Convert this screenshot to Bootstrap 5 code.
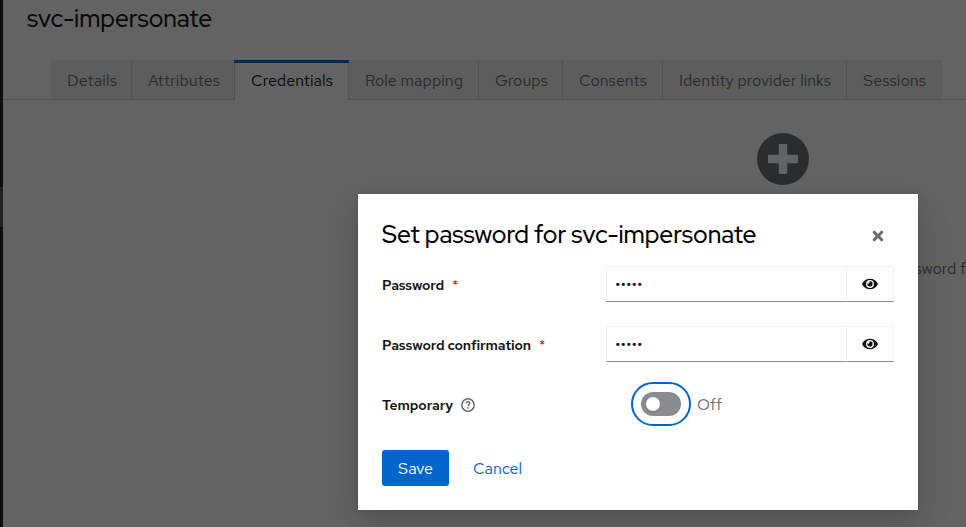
<!DOCTYPE html>
<html lang="en">
<head>
<meta charset="utf-8">
<meta name="viewport" content="width=device-width, initial-scale=1">
<title>svc-impersonate</title>
<link href="https://cdn.jsdelivr.net/npm/bootstrap@5.3.0/dist/css/bootstrap.min.css" rel="stylesheet">
<style>
body{font-family:"Red Hat Text",Inter,"Liberation Sans",sans-serif;font-size:16px;line-height:24px;color:#151515;height:527px;overflow:hidden;background:#fff}
.shell{height:527px}
.side-nav{width:3px;background:#212427;padding-top:187px;flex:none}
.side-current{height:40px;background:#4f5255}
.page-title{font-family:"Red Hat Display",Inter,sans-serif;font-size:24.5px;line-height:31px;font-weight:500;margin:0;padding:3px 0 0 24px;height:60px}
.user-tabs{padding-left:48px;height:40px;border-bottom:1px solid #d2d2d2}
.user-tabs .nav-link{height:39px;padding:9px 0 0 16px;background:#f0f0f0;color:#6a6e73;border-radius:0;border-right:1px solid #d2d2d2;font-weight:400;white-space:nowrap}
.user-tabs .nav-link.active{height:40px;margin-left:-1px;padding-left:17px;border:0;color:#151515;background:linear-gradient(#06c,#06c) 0 0/100% 3px no-repeat,linear-gradient(#d2d2d2,#d2d2d2) 0 0/1px 100% no-repeat,linear-gradient(#d2d2d2,#d2d2d2) 100% 0/1px 100% no-repeat,#fff}
.user-tabs li:last-child .nav-link{border-right:0}
.empty-icon{width:52px;height:52px;margin:33px 0 0 754px;display:block}
.empty-copy{margin-top:72px;color:#6a6e73;white-space:nowrap}
.shade{position:absolute;inset:0;background:rgba(3,3,3,.62)}
.dialog-box{position:absolute;left:358px;top:194px;width:560px;height:316px;background:#fff;padding:24px;box-shadow:0 16px 32px rgba(3,3,3,.16),0 0 8px rgba(3,3,3,.1)}
.dialog-title{font-family:"Red Hat Display",Inter,sans-serif;font-size:24.5px;line-height:31px;font-weight:500;margin:1px 0 0;color:#000}
.dialog-head{height:48px}
.close-btn{width:32px;height:32px;margin-top:2px}
.field{height:36px;margin-bottom:24px}
.field-name{width:224px;font-size:14px;line-height:21px;font-weight:600;padding-top:9px}
.req{color:#c9190b;font-weight:400;font-size:14px;margin-left:8px}
.pass-group{width:288px;height:36px}
.pass-group .form-control{height:36px;border:1px solid #f0f0f0;border-bottom-color:#8a8d90;border-radius:0;padding:0 8px;color:#151515;font-size:16px}
.pass-group .btn{width:48px;flex:none;height:36px;padding:0;border:1px solid #f0f0f0;border-bottom-color:#8a8d90;border-radius:0}
.toggle-ring{width:60px;height:44px;border:2px solid #06c;border-radius:22px;margin-left:25px;margin-top:-4px}
.toggle-track{width:40px;height:24px;border-radius:12px;background:#8a8d90;padding-left:5px}
.toggle-knob{width:14px;height:14px;border-radius:50%;background:#fff;box-shadow:0 1px 2px rgba(3,3,3,.15)}
.off-label{color:#6a6e73;margin:7px 0 0 6px}
.help-icon{margin-top:3px}
.save-btn{width:67px;height:36px;padding:1px 0 0;background:#06c;color:#fff;border:0;border-radius:3px}
.cancel-btn{width:97px;height:36px;padding:1px 0 0;color:#06c;border:0}
.actions{padding-top:4px}
.fit{display:inline-block;white-space:nowrap}
</style>
<script src="https://cdn.jsdelivr.net/npm/bootstrap@5.3.0/dist/js/bootstrap.bundle.min.js"></script>
</head>
<body>
<div class="shell d-flex">
  <div class="side-nav"><div class="side-current"></div></div>
  <main class="flex-grow-1 overflow-hidden">
    <h1 class="page-title"><span class="fit" data-w="185">svc-impersonate</span></h1>
    <ul class="nav user-tabs flex-nowrap">
      <li class="nav-item"><a class="nav-link" data-tab="81"><span class="fit" data-w="50">Details</span></a></li>
      <li class="nav-item"><a class="nav-link" data-tab="103"><span class="fit" data-w="72">Attributes</span></a></li>
      <li class="nav-item"><a class="nav-link active" data-tab="115"><span class="fit" data-w="82">Credentials</span></a></li>
      <li class="nav-item"><a class="nav-link" data-tab="130"><span class="fit" data-w="98">Role mapping</span></a></li>
      <li class="nav-item"><a class="nav-link" data-tab="84"><span class="fit" data-w="53">Groups</span></a></li>
      <li class="nav-item"><a class="nav-link" data-tab="100"><span class="fit" data-w="68">Consents</span></a></li>
      <li class="nav-item"><a class="nav-link" data-tab="184"><span class="fit" data-w="152">Identity provider links</span></a></li>
      <li class="nav-item"><a class="nav-link" data-tab="95"><span class="fit" data-w="63">Sessions</span></a></li>
    </ul>
    <svg class="empty-icon" viewBox="0 0 52 52"><circle cx="26" cy="26" r="26" fill="#6a6e73"/><path d="M22.8 11h6.4q1 0 1 1v9.800h9.800q1 0 1 1v6.400q0 1-1 1h-9.800V40q0 1-1 1h-6.400q-1 0-1-1v-9.800H12q-1 0-1-1v-6.400q0-1 1-1h9.800V12q0-1 1-1z" fill="#fff"/></svg>
    <div class="empty-copy text-end"><span class="fit" data-w="77">password f</span></div>
  </main>
</div>
<div class="shade"></div>
<section class="dialog-box" role="dialog" aria-label="Set password">
  <div class="dialog-head d-flex justify-content-between">
    <h2 class="dialog-title"><span class="fit" data-w="374.500">Set password for svc-impersonate</span></h2>
    <button class="btn border-0 p-0 close-btn d-flex align-items-center justify-content-center" aria-label="Close"><svg width="12" height="12" viewBox="0 0 12 12"><path d="M2.200 2.200l7.600 7.600M9.800 2.200L2.200 9.800" stroke="#6a6e73" stroke-width="3" stroke-linecap="round"/></svg></button>
  </div>
  <div class="field d-flex">
    <label class="field-name"><span class="fit" data-w="62">Password</span><span class="req">*</span></label>
    <div class="input-group pass-group flex-nowrap"><input class="form-control" type="password" value="12345" aria-label="Password"><button class="btn d-flex align-items-center justify-content-center" aria-label="Show password"><svg width="16" height="14" viewBox="0 0 576 512"><path fill="#151515" d="M572.520 241.400C518.290 135.590 410.930 64 288 64S57.680 135.640 3.480 241.410a32.350 32.350 0 0 0 0 29.190C57.710 376.410 165.070 448 288 448s230.320-71.640 284.520-177.410a32.350 32.350 0 0 0 0-29.190zM288 400a144 144 0 1 1 144-144 143.930 143.930 0 0 1-144 144zm0-240a95.310 95.310 0 0 0-25.310 3.790 47.850 47.850 0 0 1-66.900 66.900A95.780 95.780 0 1 0 288 160z"/></svg></button></div>
  </div>
  <div class="field d-flex">
    <label class="field-name"><span class="fit" data-w="149">Password confirmation</span><span class="req">*</span></label>
    <div class="input-group pass-group flex-nowrap"><input class="form-control" type="password" value="12345" aria-label="Password confirmation"><button class="btn d-flex align-items-center justify-content-center" aria-label="Show password"><svg width="16" height="14" viewBox="0 0 576 512"><path fill="#151515" d="M572.520 241.400C518.290 135.590 410.930 64 288 64S57.680 135.640 3.480 241.410a32.350 32.350 0 0 0 0 29.190C57.710 376.410 165.070 448 288 448s230.320-71.640 284.520-177.410a32.350 32.350 0 0 0 0-29.190zM288 400a144 144 0 1 1 144-144 143.930 143.930 0 0 1-144 144zm0-240a95.310 95.310 0 0 0-25.310 3.790 47.850 47.850 0 0 1-66.900 66.900A95.780 95.780 0 1 0 288 160z"/></svg></button></div>
  </div>
  <div class="field d-flex mb-4">
    <div class="field-name d-flex"><span class="fit" data-w="71">Temporary</span><svg class="ms-2 help-icon" width="14" height="14" viewBox="0 0 14 14" fill="none" stroke="#6a6e73"><circle cx="7" cy="7" r="6.200" stroke-width="1.500"/><path d="M5 5.300q.4-1.500 2-1.500 1.900 0 1.900 1.500 0 .9-1 1.400-.8.400-.8 1.200" stroke-width="1.400"/><circle cx="7" cy="9.900" r=".9" fill="#6a6e73" stroke="none"/></svg></div>
    <div class="toggle-ring d-flex align-items-center justify-content-center"><div class="toggle-track d-flex align-items-center"><div class="toggle-knob"></div></div></div>
    <span class="off-label"><span class="fit" data-w="25">Off</span></span>
  </div>
  <div class="d-flex actions"><button class="btn save-btn"><span class="fit" data-w="35">Save</span></button><button class="btn cancel-btn"><span class="fit" data-w="49">Cancel</span></button></div>
</section>
<script>
document.querySelectorAll('[data-tab]').forEach(function(t){t.style.width=t.dataset.tab+'px';});
// Even out tracking so each label fills its measure.
document.querySelectorAll('.fit').forEach(function(s){
  var gap=(+s.dataset.w-s.getBoundingClientRect().width)/s.textContent.length;
  s.style.letterSpacing=gap.toFixed(3)+'px';
});
</script>
</body>
</html>
